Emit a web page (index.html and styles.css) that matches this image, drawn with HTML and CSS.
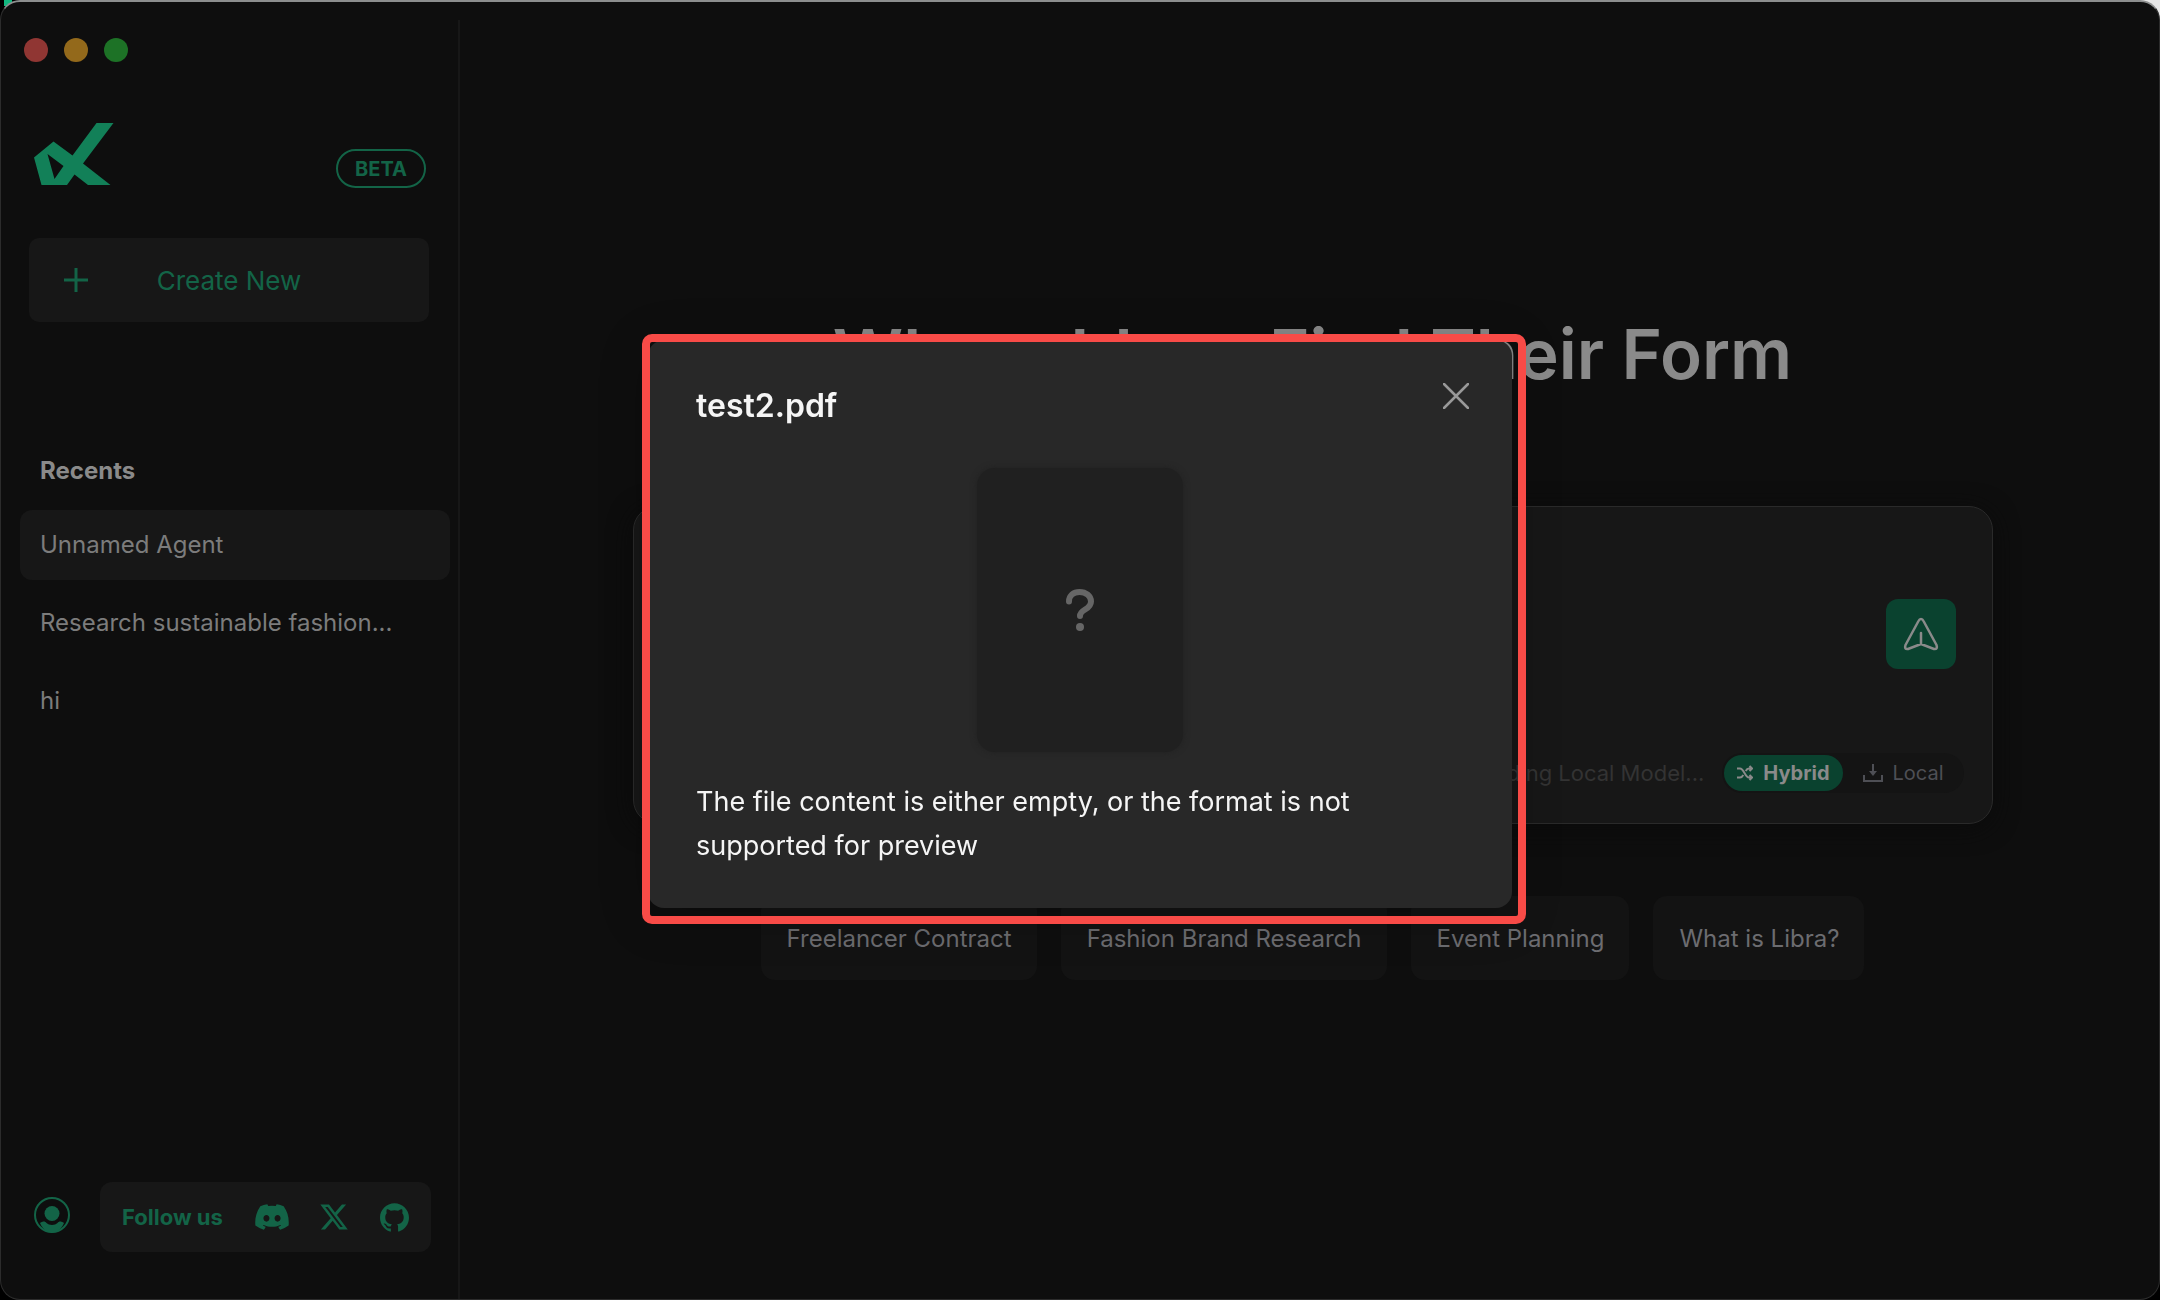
FILE: index.html
```html
<!DOCTYPE html>
<html lang="en">
<head>
<meta charset="utf-8">
<title>Libra</title>
<link rel="stylesheet" href="styles.css">
</head>
<body>
<div class="window">
  <aside class="sidebar">
    <div class="lights"><span class="light close"></span><span class="light minimize"></span><span class="light maximize"></span></div>
    <div class="brand">
      <svg class="logo" viewBox="0 0 80 62" aria-label="Libra"><path fill-rule="evenodd" d="M62.500 0H79.500L49 40.500L76.500 62H54L40.500 51.500L33 62H7.500L0 34.500L19.500 18.500L38.500 32.500ZM13.500 31L20.500 56L29.500 43Z"/></svg>
      <span class="beta">BETA</span>
    </div>
    <button class="create"><svg viewBox="0 0 24 24"><path d="M12 0V24M0 12H24"/></svg><span>Create New</span></button>
    <h2 class="recents-title">Recents</h2>
    <nav class="recents">
      <a href="#" class="recent active">Unnamed Agent</a>
      <a href="#" class="recent">Research sustainable fashion...</a>
      <a href="#" class="recent">hi</a>
    </nav>
    <footer class="foot">
      <button class="account" aria-label="Account"><svg viewBox="0 0 36 36"><circle class="ring" cx="18" cy="18" r="17"/><circle cx="18" cy="16.500" r="7.500"/><path d="M6 26C9 24 11 24 12.500 26C15 28.500 21 28.500 23.500 26C25 24 27 24 30 26C27 33 22 35.500 18 35.500S9 33 6 26Z"/></svg></button>
      <div class="follow">
        <span>Follow us</span>
        <a href="#" aria-label="Discord"><svg class="discord" viewBox="0 2.700 24 18.600"><path d="M20.317 4.370a19.791 19.791 0 0 0-4.885-1.515.074.074 0 0 0-.079.037c-.21.375-.444.864-.608 1.250a18.270 18.270 0 0 0-5.487 0 12.640 12.640 0 0 0-.617-1.250.077.077 0 0 0-.079-.037A19.736 19.736 0 0 0 3.677 4.370a.07.07 0 0 0-.032.027C.533 9.046-.32 13.580.099 18.057a.082.082 0 0 0 .031.057 19.900 19.900 0 0 0 5.993 3.030.078.078 0 0 0 .084-.028c.462-.63.874-1.295 1.226-1.994a.076.076 0 0 0-.041-.106 13.107 13.107 0 0 1-1.872-.892.077.077 0 0 1-.008-.128 10.200 10.200 0 0 0 .372-.292.074.074 0 0 1 .077-.01c3.928 1.793 8.180 1.793 12.062 0a.074.074 0 0 1 .078.010c.12.098.246.198.373.292a.077.077 0 0 1-.006.127 12.299 12.299 0 0 1-1.873.892.077.077 0 0 0-.041.107c.36.698.772 1.362 1.225 1.993a.076.076 0 0 0 .084.028 19.839 19.839 0 0 0 6.002-3.030.077.077 0 0 0 .032-.054c.5-5.177-.838-9.674-3.549-13.660a.061.061 0 0 0-.031-.03zM8.020 15.330c-1.183 0-2.157-1.085-2.157-2.419 0-1.333.956-2.419 2.157-2.419 1.210 0 2.176 1.096 2.157 2.420 0 1.333-.956 2.418-2.157 2.418zm7.975 0c-1.183 0-2.157-1.085-2.157-2.419 0-1.333.955-2.419 2.157-2.419 1.210 0 2.176 1.096 2.157 2.420 0 1.333-.946 2.418-2.157 2.418z"/></svg></a>
        <a href="#" aria-label="X"><svg class="x" viewBox="1 2 22 20"><path d="M18.244 2.250h3.308l-7.227 8.260 8.502 11.240H16.170l-5.214-6.817L4.990 21.750H1.680l7.730-8.835L1.254 2.250H8.080l4.713 6.231zm-1.161 17.520h1.833L7.084 4.126H5.117z"/></svg></a>
        <a href="#" aria-label="GitHub"><svg class="github" viewBox="0 0 24 24"><path d="M12 .297c-6.630 0-12 5.373-12 12 0 5.303 3.438 9.800 8.205 11.385.6.113.820-.258.820-.577 0-.285-.010-1.040-.015-2.040-3.338.724-4.042-1.610-4.042-1.610C4.422 18.070 3.633 17.700 3.633 17.700c-1.087-.744.084-.729.084-.729 1.205.084 1.838 1.236 1.838 1.236 1.070 1.835 2.809 1.305 3.495.998.108-.776.417-1.305.760-1.605-2.665-.3-5.466-1.332-5.466-5.930 0-1.310.465-2.380 1.235-3.220-.135-.303-.540-1.523.105-3.176 0 0 1.005-.322 3.300 1.230.960-.267 1.980-.399 3-.405 1.020.006 2.040.138 3 .405 2.280-1.552 3.285-1.230 3.285-1.230.645 1.653.240 2.873.120 3.176.765.840 1.230 1.910 1.230 3.220 0 4.610-2.805 5.625-5.475 5.920.420.360.810 1.096.810 2.220 0 1.606-.015 2.896-.015 3.286 0 .315.210.690.825.570C20.565 22.092 24 17.592 24 12.297c0-6.627-5.373-12-12-12"/></svg></a>
      </div>
    </footer>
  </aside>

  <main class="main">
    <h1>Where Ideas Find Their Form</h1>
    <section class="composer">
      <div class="prompt">
        <textarea aria-label="Prompt"></textarea>
        <button class="send" aria-label="Send"><svg viewBox="0 0 36 34"><path d="M18 2Q19.500 2 20.500 4L33.500 28Q35 32.500 31 32L18 27L5 32Q1 32.500 2.500 28L15.500 4Q16.500 2 18 2ZM18 16V27"/></svg></button>
      </div>
      <div class="modes">
        <span class="status">Downloading Local Model...</span>
        <div class="toggle">
          <button class="mode on"><svg class="shuffle" viewBox="0 0 16 16"><path d="M0 3.500H3C7 3.500 8 12.500 12 12.500H15M0 12.500H3C4.500 12.500 5.500 11.500 6.300 10M8.700 6C9.500 4.500 10.500 3.500 12 3.500H15M12.500 1L15 3.500L12.500 6M12.500 10L15 12.500L12.500 15"/></svg>Hybrid</button>
          <button class="mode"><svg class="download" viewBox="0 0 20 20"><path d="M10 1V11M1 12V18H19V12"/><path class="tip" d="M6 8H14L10 13Z"/></svg>Local</button>
        </div>
      </div>
    </section>
    <div class="chips">
      <button>Freelancer Contract</button>
      <button>Fashion Brand Research</button>
      <button>Event Planning</button>
      <button>What is Libra?</button>
    </div>
  </main>
</div>

<div class="overlay">
  <div class="dialog" role="dialog" aria-labelledby="file-name">
    <header>
      <h2 id="file-name">test2.pdf</h2>
      <button class="dismiss" aria-label="Close"><svg viewBox="0 0 26 26"><path d="M1 1L25 25M25 1L1 25"/></svg></button>
    </header>
    <div class="preview"><svg viewBox="0 0 28 42"><path d="M3 12.500C3 6.500 7.500 3 13.500 3C20 3 25 7 25 12.500C25 21 14 20 14 27"/><circle cx="14" cy="38" r="4"/></svg></div>
    <p>The file content is either empty, or the format is not supported for preview</p>
  </div>
</div>
</body>
</html>
```
FILE: styles.css
```css
* { box-sizing: border-box; }
html { background: #000; }
body { margin: 0; background: linear-gradient(115deg, #12b880 8px, transparent 8px) 4px 0 / 8px 6px no-repeat, linear-gradient(#e6e6e6, #e6e6e6) right top / 24px 24px no-repeat, #000; font-family: Inter, "Liberation Sans", sans-serif; font-size: 24px; color: #8a8a8a; }
h1, h2, p { margin: 0; }
button { font: inherit; color: inherit; border: 0; padding: 0; background: none; cursor: pointer; }
a { color: inherit; text-decoration: none; }
svg { display: block; }

.window { display: flex; min-height: 100vh; background: #0e0e0e; border: 1px solid #2c2c2c; border-top: 2px solid #8c8e8e; border-radius: 20px; overflow: hidden; }

.sidebar { width: 459px; flex: none; display: flex; flex-direction: column; background: linear-gradient(#171717, #171717) right 18px / 2px 100% no-repeat; }
.lights { display: flex; gap: 16px; padding: 36px 23px 0; }
.light { width: 24px; height: 24px; border-radius: 50%; }
.close { background: #903633; }
.minimize { background: #93691b; }
.maximize { background: #1d7226; }
.brand { display: flex; justify-content: space-between; align-items: flex-end; margin: 61px 34px 50px 33px; height: 65px; }
.logo { width: 80px; height: 62px; fill: #128058; align-self: flex-start; }
.beta { display: flex; align-items: center; justify-content: center; width: 90px; height: 39px; border: 2px solid #136447; border-radius: 20px; color: #136447; font-size: 20px; font-weight: 700; }
.create { position: relative; display: flex; align-items: center; justify-content: center; height: 84px; margin: 0 31px 0 28px; border-radius: 10px; background: #171717; color: #136447; font-size: 26px; }
.create svg { position: absolute; left: 35px; width: 24px; height: 24px; stroke: #136447; stroke-width: 3; }
.recents-title { margin: 134px 0 24px 39px; font-size: 24px; line-height: 30px; font-weight: 700; }
.recents { display: flex; flex-direction: column; gap: 8px; padding: 0 10px 0 19px; }
.recent { display: flex; align-items: center; height: 70px; padding: 0 20px 2px; border-radius: 12px; color: #7c7c7c; }
.recent.active { background: #171717; }
.foot { display: flex; align-items: center; gap: 30px; margin: auto 29px 47px 33px; color: #136447; }
.account { padding-bottom: 4px; }
.account svg { width: 36px; height: 36px; fill: #136447; }
.account .ring { fill: none; stroke: #136447; stroke-width: 2; }
.follow { flex: 1; display: flex; align-items: center; justify-content: space-between; height: 70px; padding: 0 22px; border-radius: 12px; background: #171717; font-size: 22px; font-weight: 700; }
.follow svg { fill: #136447; }
.discord { width: 34px; height: 26px; }
.x { width: 28px; height: 26px; }
.github { width: 29px; height: 29px; }

.main { flex: 1; display: flex; flex-direction: column; align-items: center; padding: 304px 160px 0 166px; }
h1 { font-size: 69px; line-height: 96px; font-weight: 600; white-space: nowrap; }
.composer { width: 100%; max-width: 1360px; height: 318px; margin: 104px 0 72px; padding: 32px 28px 30px 36px; display: flex; flex-direction: column; justify-content: space-between; background: #171717; border: 1px solid #2a2a2a; border-radius: 24px; box-shadow: 0 4px 24px #0b0b0b; }
.prompt { display: flex; align-items: flex-end; gap: 24px; padding-right: 8px; }
textarea { flex: 1; height: 130px; background: none; border: 0; resize: none; color: inherit; font: inherit; outline: 0; }
.send { width: 70px; height: 70px; border-radius: 12px; background: #0a422f; display: grid; place-items: center; }
.send svg { width: 36px; height: 34px; fill: none; stroke: #8a8a8a; stroke-width: 2.5; stroke-linejoin: round; stroke-linecap: round; }
.modes { display: flex; align-items: center; justify-content: flex-end; gap: 18px; }
.status { font-size: 22px; color: #333; }
.toggle { display: flex; height: 40px; padding: 2px; border-radius: 20px; background: #141414; font-size: 20px; }
.mode { display: flex; align-items: center; gap: 10px; height: 36px; padding: 0 18px 0 20px; border-radius: 18px; color: #4e4f55; }
.mode.on { padding: 0 13px; background: #0a422f; color: #8a8a8a; font-weight: 700; }
.mode svg { fill: none; stroke: currentColor; stroke-width: 2; }
.shuffle { width: 16px; height: 16px; }
.download { width: 20px; height: 20px; }
.mode .tip { fill: currentColor; stroke: none; }
.chips { display: flex; gap: 24px; }
.chips button { height: 84px; padding: 0 25px 0 26px; border-radius: 14px; background: #131313; color: #6c6c70; white-space: nowrap; }

.overlay { position: fixed; inset: 0; display: flex; align-items: center; justify-content: center; padding-bottom: 52px; }
.dialog { position: relative; width: 864px; padding: 40px 43px 40px 48px; border-radius: 16px; background: #282828; color: #f5f5f5; box-shadow: 0 8px 48px rgba(0, 0, 0, .25); }
.dialog::after { content: ""; position: absolute; inset: -6px -14px -16px -6px; border: 8px solid #f84b47; border-radius: 10px; pointer-events: none; }
.dialog header { display: flex; justify-content: space-between; align-items: flex-start; height: 88px; }
.dialog h2 { font-size: 32px; line-height: 52px; font-weight: 600; }
.dismiss { margin-top: 3px; }
.dismiss svg { width: 26px; height: 26px; stroke: #999; stroke-width: 2.5; stroke-linecap: round; }
.preview { display: grid; place-items: center; width: 206px; height: 284px; margin: 0 auto 28px 281px; border-radius: 18px; background: #202020; box-shadow: 0 0 6px #202020; }
.preview svg { width: 28px; height: 42px; fill: #666; }
.preview path { fill: none; stroke: #666; stroke-width: 6; stroke-linecap: round; }
.dialog p { font-size: 27px; line-height: 44px; }
```
